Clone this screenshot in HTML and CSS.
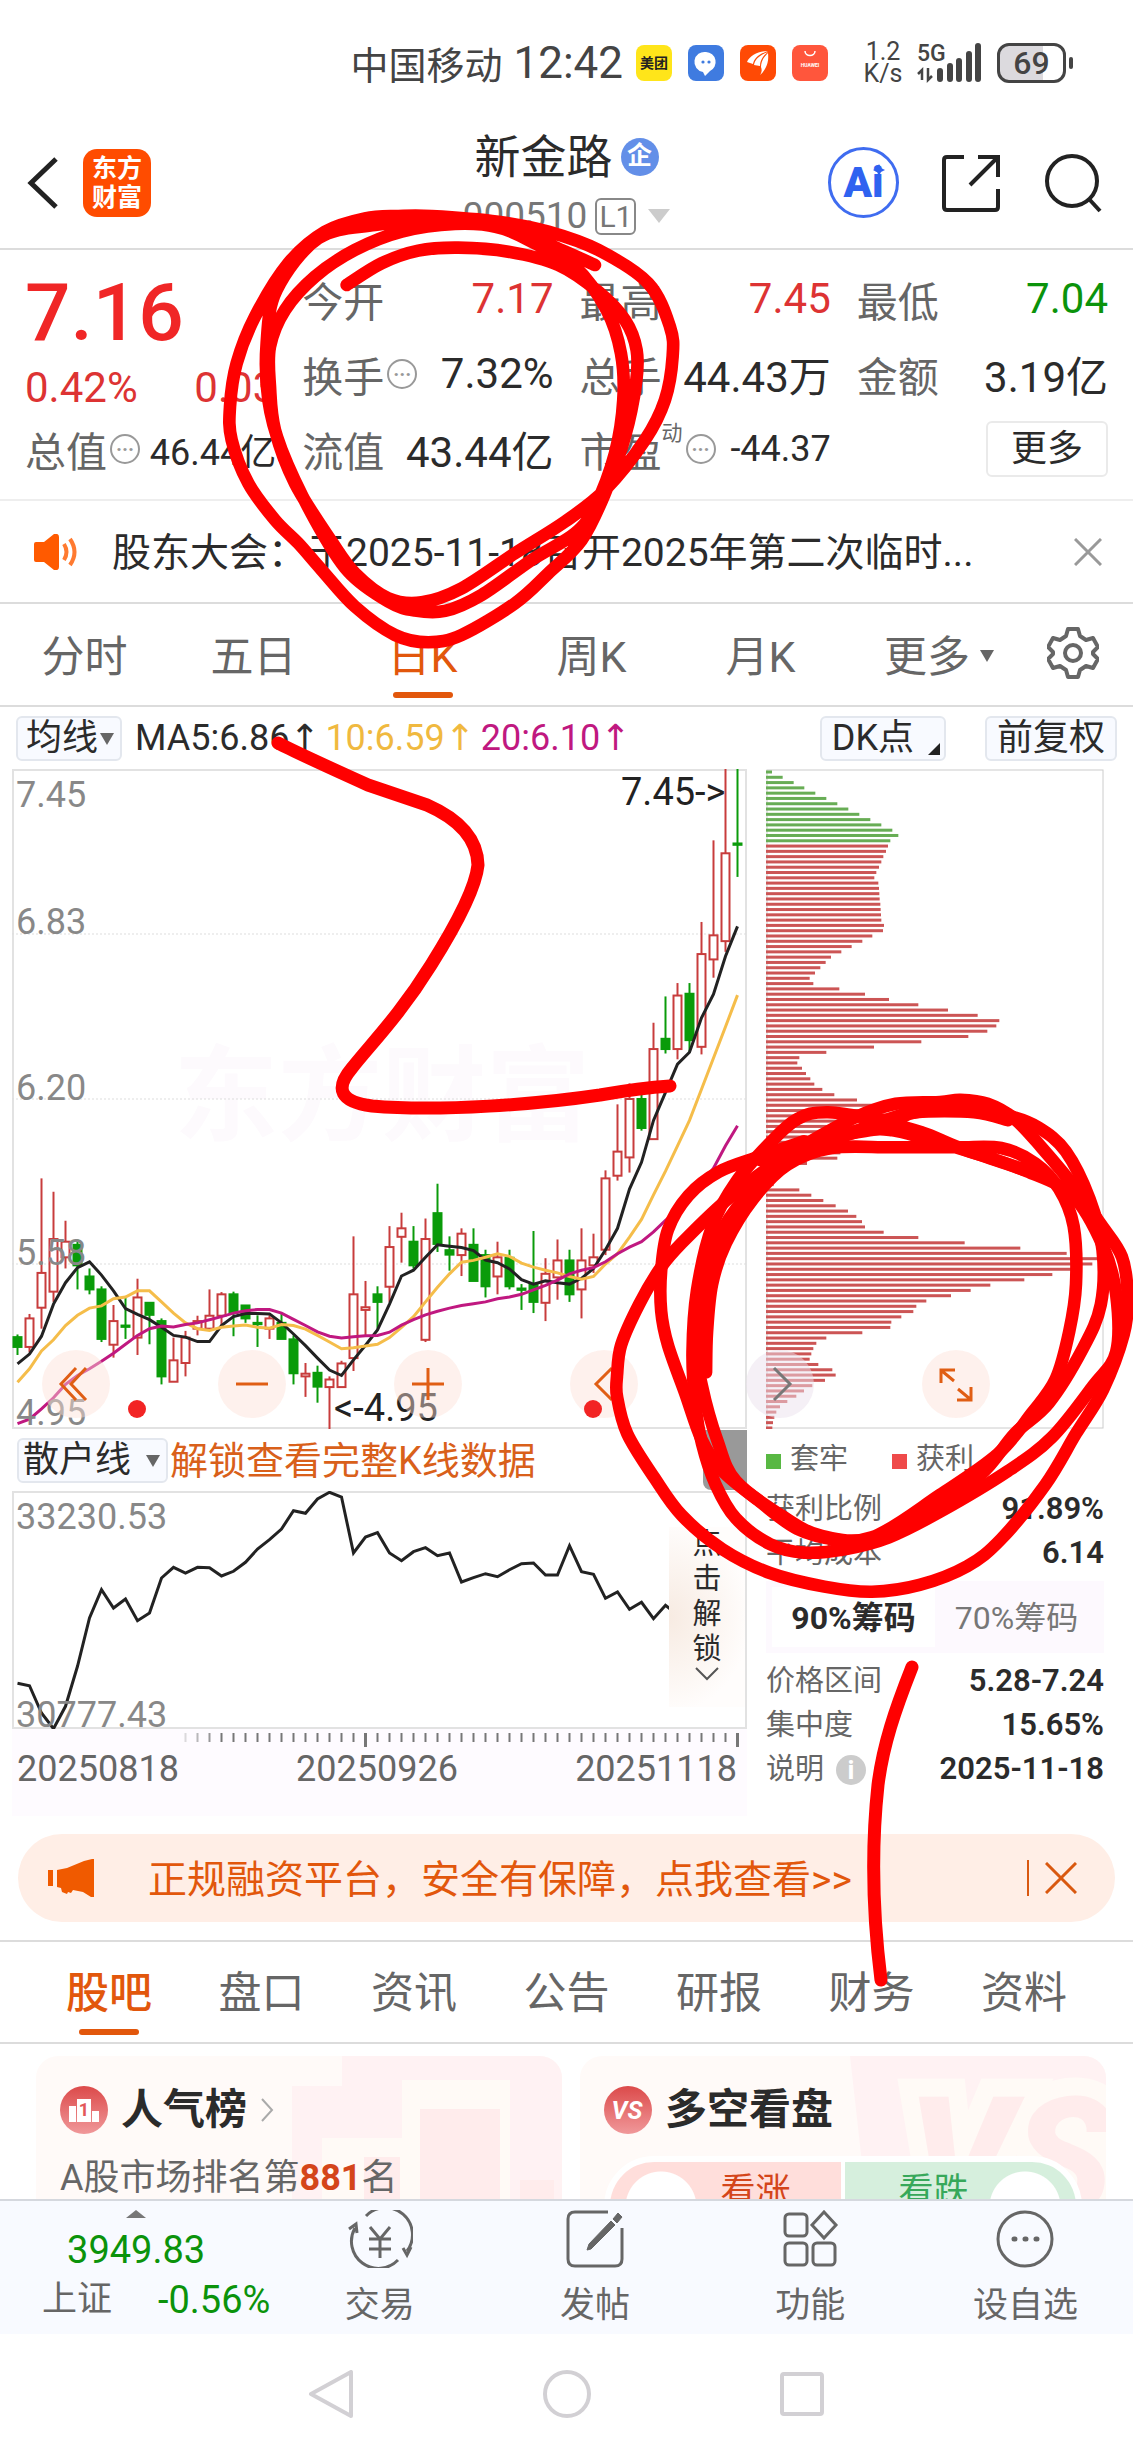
FILE: index.html
```html
<!DOCTYPE html>
<html lang="zh-CN">
<head>
  <meta charset="UTF-8">
  <meta name="viewport" content="width=device-width, initial-scale=1.0">
  <title>新金路 000510</title>
  <link rel="stylesheet" href="styles.css">
</head>
<body>

<div class="status-bar">
  <span class="carrier">中国移动</span>
  <span class="clock">12:42</span>
  <div class="apps">
    <span class="app app-yellow">美团</span>
    <span class="app app-blue">
      <svg viewBox="0 0 36 36"><path d="M18 7a10 10 0 0 1 4 19l-5 5-2-4A10 10 0 0 1 18 7z" fill="#fff"/><circle cx="15" cy="17" r="1.6" fill="#3f7be0"/><circle cx="21" cy="17" r="1.6" fill="#3f7be0"/></svg>
    </span>
    <span class="app app-orange">
      <svg viewBox="0 0 36 36" fill="#fff"><path d="M7 17C10 10 19 6 28 6c-9 3-14 7-15 13z"/><path d="M14 20c1-6 6-10 14-13-5 4-8 8-8 14z"/><path d="M21 22c0-6 3-10 7-14 1 8-1 16-8 22 2-3 2-5 1-8z"/></svg>
    </span>
    <span class="app app-coral">
      <svg viewBox="0 0 36 36"><path d="M13 6c0 6 10 6 10 0" fill="none" stroke="#fff" stroke-width="1.5"/><text x="18" y="22" font-size="5" text-anchor="middle" fill="#fff">HUAWEI</text></svg>
    </span>
  </div>
  <div class="speed"><span>1.2</span><span>K/s</span></div>
  <svg class="signal" viewBox="0 0 66 42">
    <text x="0" y="19" font-size="23" font-weight="500">5G</text>
    <path d="M5 38V28l-4 4M11 26v12l4-4" fill="none" stroke="#444" stroke-width="2.5"/>
    <path d="M23 37v-8M33 37v-13M42 37V19M52 37V12M61 37V4" stroke="#444" stroke-width="6" stroke-linecap="round"/>
  </svg>
  <div class="battery">69</div>
</div>

<header class="header">
  <button class="icon-btn back" aria-label="返回"><svg viewBox="0 0 32 54"><path d="M29 3L4 27l25 24" fill="none" stroke="#222" stroke-width="5"/></svg></button>
  <div class="brand">东方<br>财富</div>
  <div class="stock">
    <h1>新金路<span class="badge">企</span></h1>
    <div class="code">000510<span class="level">L1</span><i class="tri tri-light"></i></div>
  </div>
  <div class="actions">
    <button class="icon-btn ai" aria-label="Ai">Ai<svg viewBox="0 0 12 12"><path d="M6 0l2 4 4 2-4 2-2 4-2-4-4-2 4-2z" fill="#2f62f0"/></svg></button>
    <button class="icon-btn" aria-label="分享"><svg width="58" height="58" viewBox="0 0 58 58" fill="none" stroke="#222" stroke-width="4"><path d="M22 3H5q-3 0-3 3v47q0 3 3 3h48q3 0 3-3V35M36 3h20v20M56 3L28 31"/></svg></button>
    <button class="icon-btn" aria-label="搜索"><svg width="60" height="60" viewBox="0 0 60 60" fill="none" stroke="#222" stroke-width="4"><circle cx="29" cy="28" r="25"/><path d="M46 46l11 12"/></svg></button>
  </div>
</header>

<section class="quote">
  <div class="price-cell">
    <div class="price">7.16</div>
    <div class="change"><span>0.42%</span><span>0.03</span></div>
  </div>
  <div class="cell"><span>今开</span><b class="up">7.17</b></div>
  <div class="cell"><span>最高</span><b class="up">7.45</b></div>
  <div class="cell"><span>最低</span><b class="down">7.04</b></div>
  <div class="cell"><span>换手</span><i class="dots">···</i><b>7.32%</b></div>
  <div class="cell"><span>总手</span><b>44.43万</b></div>
  <div class="cell"><span>金额</span><b>3.19亿</b></div>
  <div class="cell small"><span>总值</span><i class="dots">···</i><b>46.44亿</b></div>
  <div class="cell"><span>流值</span><b>43.44亿</b></div>
  <div class="cell small dynamic"><span>市盈<sup>动</sup></span><i class="dots">···</i><b>-44.37</b></div>
  <div class="cell"><button class="more">更多</button></div>
</section>

<section class="notice">
  <svg width="44" height="36" viewBox="0 0 44 36"><path d="M2 8h8L20 0q5-1 5 3v30q0 4-5 3L10 28H2q-2 0-2-2V10q0-2 2-2z" fill="#ff5a00"/><path d="M30 10q5 8 0 16M36 5q9 13 0 26" fill="none" stroke="#ff7a30" stroke-width="4"/></svg>
  <a href="#">股东大会：于2025-11-18召开2025年第二次临时...</a>
  <button class="icon-btn" aria-label="关闭"><svg width="28" height="28" viewBox="0 0 28 28"><path d="M1 1l26 26M27 1L1 27" stroke="#999" stroke-width="3"/></svg></button>
</section>

<nav class="periods">
  <button>分时</button>
  <button>五日</button>
  <button class="active">日K</button>
  <button>周K</button>
  <button>月K</button>
  <button class="period-more">更多<i class="tri"></i></button>
  <button class="period-set" aria-label="设置"><svg width="52" height="52" viewBox="0 0 52 52" fill="none" stroke="#666" stroke-width="4" stroke-linejoin="round"><path d="M21 2h10l2 7 6 4 7-2 5 9-5 5v2l5 5-5 9-7-2-6 4-2 7H21l-2-7-6-4-7 2-5-9 5-5v-2l-5-5 5-9 7 2 6-4z"/><circle cx="26" cy="26" r="8"/></svg></button>
</nav>

<div class="ma-bar">
  <label class="pick"><select aria-label="指标"><option>均线</option></select><i class="tri"></i></label>
  <span>MA5:6.86<em>↑</em></span>
  <span class="ma10">10:6.59<em>↑</em></span>
  <span class="ma20">20:6.10<em>↑</em></span>
  <button class="chip-btn dk">DK点</button>
  <button class="chip-btn">前复权</button>
</div>

<main class="analysis">
  <div class="kline">
    <svg id="candles" class="chart" viewBox="0 0 735 660">
      <rect x="1" y="1" width="733" height="658" fill="#fff" stroke="#e2e2e2" stroke-width="2"/>
      <text x="370" y="364" class="watermark">东方财富</text>
      <path d="M0 165h735M0 330h735M0 495h735" stroke="#ddd" stroke-dasharray="2 2"/>
      <g id="candleBars"></g>
      <g class="axis">
        <text x="4" y="38">7.45</text>
        <text x="4" y="165">6.83</text>
        <text x="4" y="331">6.20</text>
        <text x="4" y="496">5.58</text>
        <text x="4" y="656">4.95</text>
      </g>
      <text x="609" y="36" class="mark">7.45-&gt;</text>
      <text x="322" y="652" class="mark">&lt;-4.95</text>
    </svg>

    <div class="sub-bar">
      <label class="pick pick-wide"><select aria-label="副图"><option>散户线</option></select><i class="tri"></i></label>
      <a href="#">解锁查看完整K线数据</a>
      <span class="handle">›</span>
    </div>

    <div class="retail">
      <svg id="retail" class="chart" viewBox="0 0 735 238">
        <rect x="1" y="1" width="733" height="236" fill="#fff" stroke="#e2e2e2" stroke-width="2"/>
        <g id="retailLine"></g>
        <g class="axis">
          <text x="4" y="38">33230.53</text>
          <text x="4" y="236">30777.43</text>
        </g>
      </svg>
      <button class="unlock">点击解锁<svg width="24" height="14" viewBox="0 0 24 14"><path d="M1 1l11 11L23 1" fill="none" stroke="#555" stroke-width="2"/></svg></button>
    </div>

    <div class="timeline">
      <svg id="ticks" class="chart" viewBox="0 0 735 20"></svg>
      <div class="dates"><span>20250818</span><span>20250926</span><span>20251118</span></div>
    </div>
  </div>

  <aside class="chips">
    <svg id="chips" class="chart" viewBox="0 0 338 660">
      <rect x="1" y="1" width="336" height="658" fill="#fff" stroke="#ccc"/>
    </svg>
    <div class="legend"><span><i class="sq sq-green"></i>套牢</span><span><i class="sq sq-red"></i>获利</span></div>
    <dl class="stats">
      <div><dt>获利比例</dt><dd>91.89%</dd></div>
      <div><dt>平均成本</dt><dd>6.14</dd></div>
    </dl>
    <div class="switch"><button class="on">90%筹码</button><button>70%筹码</button></div>
    <dl class="stats">
      <div><dt>价格区间</dt><dd>5.28-7.24</dd></div>
      <div><dt>集中度</dt><dd>15.65%</dd></div>
      <div><dt>说明<i class="info">i</i></dt><dd>2025-11-18</dd></div>
    </dl>
  </aside>

  <div class="chart-tools">
    <button class="dot" aria-label="最左"><svg viewBox="0 0 68 68"><path d="M34 18L19 34l15 16M44 18L29 34l15 16"/></svg></button>
    <button aria-label="缩小"><svg viewBox="0 0 68 68"><path d="M18 34h32"/></svg></button>
    <button aria-label="放大"><svg viewBox="0 0 68 68"><path d="M18 34h32M34 18v32"/></svg></button>
    <button class="dot dot-left" aria-label="向左"><svg viewBox="0 0 68 68"><path d="M42 18L26 34l16 16"/></svg></button>
    <button class="grey" aria-label="向右"><svg viewBox="0 0 68 68"><path d="M28 18l16 16-16 16"/></svg></button>
    <button aria-label="全屏"><svg viewBox="0 0 68 68"><path d="M19 33V20h14M20 21l12 10M49 37v13H35M48 49L36 39"/></svg></button>
  </div>
</main>

<div class="banner">
  <svg width="46" height="38" viewBox="0 0 46 38" fill="#f05a00"><path d="M0 11h5v16H0zM9 11l10-2 17-7 8-2h2v38h-3l-8-5-10-2-2 3-3-1-1 2-5-2-1-4-4-1z"/></svg>
  <a href="#">正规融资平台，安全有保障，点我查看&gt;&gt;</a>
  <button class="icon-btn" aria-label="关闭广告"><svg width="32" height="32" viewBox="0 0 32 32"><path d="M1 1l30 30M31 1L1 31" stroke="#d9580f" stroke-width="3"/></svg></button>
</div>

<nav class="sections">
  <a href="#" class="active">股吧</a>
  <a href="#">盘口</a>
  <a href="#">资讯</a>
  <a href="#">公告</a>
  <a href="#">研报</a>
  <a href="#">财务</a>
  <a href="#">资料</a>
</nav>

<section class="feed">
  <article class="card">
    <svg class="card-art" viewBox="0 0 270 143"><path d="M50 0h220v143H0V30h50z" fill="#fff2f3"/><path d="M110 24h108v119h-108zM30 82h80v61H30z" fill="#fffaf6"/><path d="M128 53h80v90h-80zM228 124h34v19h-34zM72 101h36v42H72z" fill="#ffecec"/></svg>
    <h2>
      <svg width="48" height="48" viewBox="0 0 48 48"><circle cx="24" cy="24" r="24" fill="url(#iconRed)"/><path d="M9 20h7v16H9zM17 13h14v23H17zM32 25h7v11h-7z" fill="#fff"/><text x="24" y="30" font-size="18" font-weight="700" text-anchor="middle" fill="#e3575a">1</text></svg>
      人气榜
      <svg width="14" height="24" viewBox="0 0 14 24"><path d="M2 1l10 11L2 23" fill="none" stroke="#aaa" stroke-width="2"/></svg>
    </h2>
    <p>A股市场排名第<strong>881</strong>名</p>
  </article>
  <article class="card">
    <svg class="card-art" viewBox="0 0 270 143"><path d="M14 0h256v143H30z" fill="#fff2f3"/><text x="72" y="158" class="vs-art">VS</text></svg>
    <h2>
      <svg width="48" height="48" viewBox="0 0 48 48"><defs><linearGradient id="iconRed" x2="0" y2="1"><stop stop-color="#dc4a4a"/><stop offset="1" stop-color="#f0989a"/></linearGradient></defs><circle cx="24" cy="24" r="24" fill="url(#iconRed)"/><text x="23" y="33" font-size="25" font-weight="700" font-style="italic" text-anchor="middle" fill="#fff">VS</text></svg>
      多空看盘
    </h2>
    <div class="vote"><button class="bull">看涨</button><button class="bear">看跌</button></div>
  </article>
</section>

<footer class="toolbar">
  <div class="index">
    <i class="tri tri-up"></i>
    <div class="index-value">3949.83</div>
    <div class="index-row"><span>上证</span><b>-0.56%</b></div>
  </div>
  <a href="#"><svg viewBox="0 0 66 58"><path d="M19 6a27 27 0 0 1 41 35M51 50A27 27 0 0 1 8 18M2 19l7-5 1 9M64 37l-4 8-4-7"/><path d="M23 17l10 12 10-12M33 29v19M22 29h22M22 39h22"/></svg>交易</a>
  <a href="#"><svg viewBox="0 0 66 58"><path d="M46 2H13q-7 0-7 7v40q0 7 7 7h40q7 0 7-7V18"/><path d="M56 3l4 4-5 6-4-4zM49 11l4 4-24 24-4 1 2-6z" fill="#666" stroke-width="1"/></svg>发帖</a>
  <a href="#"><svg viewBox="0 0 66 58"><rect x="8" y="4" width="22" height="22" rx="4"/><rect x="8" y="33" width="22" height="22" rx="4"/><rect x="36" y="33" width="22" height="22" rx="4"/><path d="M47 2l12 13-12 13-12-13z"/></svg>功能</a>
  <a href="#"><svg viewBox="0 0 66 58"><circle cx="33" cy="29" r="27"/><path d="M22 29h1M33 29h1M44 29h1" stroke-width="5" stroke-linecap="round"/></svg>设自选</a>
</footer>

<div class="system-nav">
  <button class="icon-btn" aria-label="后退"><svg width="48" height="48" viewBox="0 0 48 48"><path d="M43 2v44L3 24z"/></svg></button>
  <button class="icon-btn" aria-label="主页"><svg width="48" height="48" viewBox="0 0 48 48"><circle cx="24" cy="24" r="22"/></svg></button>
  <button class="icon-btn" aria-label="任务"><svg width="48" height="48" viewBox="0 0 48 48"><rect x="4" y="4" width="40" height="40" rx="2"/></svg></button>
</div>

<!-- hand-drawn pen marks over the whole page -->
<svg class="pen" viewBox="0 0 1133 2453">
  <g id="penTop" transform="translate(215 200) scale(0.3333)" stroke-width="38"></g>
  <path d="M278 743Q295 752 368 785L427 805Q477 827 478 865Q475 895 431 965C400 1015 370 1045 352 1068Q325 1100 372 1106C440 1112 540 1104 600 1095Q640 1088 670 1086"/>
  <g id="penChips" transform="translate(600 1080) scale(0.34)" stroke-width="37"></g>
  <path d="M912 1667C895 1710 883 1745 878 1785C872 1840 871 1900 881 1980"/>
</svg>

<script src="charts.js"></script>
</body>
</html>
```
FILE: styles.css
```css
* {
  box-sizing: border-box;
}

body {
  margin: 0;
  position: relative;
  display: flex;
  flex-direction: column;
  height: 100vh;
  overflow: hidden;
  background: #fff;
  color: #2b2b2b;
  font-family: Roboto, "Noto Sans CJK SC", sans-serif;
}

body > * {
  flex: none;
}

button, select {
  font: inherit;
  color: inherit;
  background: none;
  border: none;
  padding: 0;
  margin: 0;
}

a {
  color: inherit;
  text-decoration: none;
}

i, em {
  font-style: normal;
}

svg {
  display: block;
}

.icon-btn {
  display: flex;
  align-items: center;
  justify-content: center;
}

.tri {
  display: inline-block;
  border: 7px solid transparent;
  border-top: 12px solid #666;
  border-bottom: 0;
}

.tri-light {
  border-width: 14px 11px 0;
  border-top-color: #ccc;
}

.tri-up {
  border: 10px solid transparent;
  border-top: 0;
  border-bottom: 8px solid #777;
}

/* status bar */
.status-bar {
  display: flex;
  align-items: center;
  justify-content: flex-end;
  height: 125px;
  padding-right: 60px;
  color: #444;
}

.carrier {
  font-size: 38px;
  margin-right: 11px;
}

.clock {
  font-size: 44px;
  margin-right: 13px;
}

.apps {
  display: flex;
  gap: 16px;
  margin-right: 35px;
}

.app {
  width: 36px;
  height: 36px;
  border-radius: 8px;
  font-size: 14px;
  font-weight: 700;
  line-height: 36px;
  text-align: center;
  color: #222;
}

.app-yellow { background: #ffe51a; }
.app-blue { background: #3f7be0; }
.app-orange { background: #ff4a05; }
.app-coral { background: #ff563c; }

.speed {
  display: flex;
  flex-direction: column;
  align-items: center;
  width: 40px;
  margin-right: 14px;
  font-size: 25px;
  line-height: 22px;
}

.signal {
  width: 66px;
  height: 42px;
  margin-right: 14px;
  fill: #444;
}

.battery {
  position: relative;
  width: 69px;
  height: 40px;
  margin-right: 7px;
  border: 3px solid #444;
  border-radius: 12px;
  background: linear-gradient(90deg, #dcdade 69%, #fff 69%);
  font-size: 32px;
  font-weight: 500;
  line-height: 34px;
  text-align: center;
}

.battery::after {
  content: "";
  position: absolute;
  right: -10px;
  top: 11px;
  width: 4px;
  height: 12px;
  border-radius: 2px;
  background: #444;
}

/* header */
.header {
  display: grid;
  grid-template-columns: auto auto 1fr;
  align-items: center;
  position: relative;
  height: 125px;
  padding: 0 30px 8px 27px;
  border-bottom: 2px solid #dcdcdc;
}

.back svg {
  width: 32px;
  height: 54px;
}

.brand {
  width: 68px;
  height: 68px;
  margin-left: 24px;
  border-radius: 14px;
  background: #ff4c00;
  color: #fff;
  font-size: 25px;
  font-weight: 700;
  line-height: 29px;
  padding-top: 5px;
  text-align: center;
}

.stock {
  position: absolute;
  left: 0;
  right: 0;
  top: 0;
  text-align: center;
}

.stock h1 {
  display: flex;
  justify-content: center;
  align-items: center;
  gap: 8px;
  margin: 0;
  font-size: 46px;
  font-weight: 400;
  line-height: 64px;
}

.badge {
  width: 38px;
  height: 38px;
  border-radius: 50%;
  background: #638fe8;
  color: #fff;
  font-size: 25px;
  font-weight: 700;
  line-height: 36px;
}

.code {
  display: flex;
  justify-content: center;
  align-items: center;
  font-size: 37px;
  line-height: 54px;
  color: #777;
}

.level {
  border: 2px solid #888;
  border-radius: 6px;
  margin: 0 12px 0 8px;
  width: 41px;
  font-size: 30px;
  line-height: 33px;
}

.actions {
  display: flex;
  justify-content: flex-end;
  align-items: center;
  gap: 43px;
}

.ai {
  position: relative;
  width: 71px;
  height: 71px;
  border: 3px solid #3f6cf0;
  border-radius: 50%;
  color: #2f62f0;
  font-size: 42px;
  font-weight: 900;
}

.ai svg {
  position: absolute;
  right: 11px;
  top: 14px;
  width: 12px;
  height: 12px;
}

/* quote numbers */
.quote {
  display: grid;
  grid-template-columns: repeat(4, 1fr);
  grid-auto-rows: 75px;
  column-gap: 26px;
  padding: 11px 25px 13px;
  border-bottom: 2px solid #eee;
}

.price-cell {
  grid-row: span 2;
  padding-top: 5px;
}

.price {
  font-size: 80px;
  font-weight: 500;
  line-height: 94px;
  color: #f02626;
}

.change {
  display: flex;
  justify-content: space-between;
  font-size: 42px;
  line-height: 56px;
  color: #d33;
}

.cell {
  display: flex;
  align-items: center;
  white-space: nowrap;
  font-size: 42px;
}

.cell span {
  position: relative;
  font-size: 41px;
  color: #666;
}

.cell b {
  margin-left: auto;
  font-weight: 400;
}

.cell sup {
  position: absolute;
  left: 82px;
  top: 0;
  font-size: 21px;
  line-height: 28px;
}

.small b {
  font-size: 36px;
}

.dots {
  width: 30px;
  height: 30px;
  margin-left: 3px;
  border: 2px solid #999;
  border-radius: 50%;
  color: #999;
  font-size: 20px;
  font-weight: 700;
  line-height: 26px;
  text-align: center;
}

.dynamic .dots {
  margin-left: 24px;
}

.up { color: #d33; }
.down { color: #0b930b; }

.more {
  margin-left: auto;
  width: 122px;
  height: 56px;
  border: 2px solid #eaeaea;
  border-radius: 6px;
  font-size: 36px;
  line-height: 50px;
}

.notice {
  display: flex;
  align-items: center;
  height: 103px;
  padding: 0 31px 0 34px;
  border-bottom: 2px solid #dcdcdc;
}

.notice a {
  flex: 1;
  margin-left: 34px;
  padding-bottom: 5px;
  font-size: 39px;
  white-space: nowrap;
}

/* period tabs */
.periods {
  display: flex;
  height: 103px;
  padding-right: 20px;
  border-bottom: 2px solid #dcdcdc;
  font-size: 43px;
  color: #666;
}

.periods button {
  position: relative;
  flex: 169;
  padding-bottom: 3px;
}

.periods .period-more {
  flex: 188;
}

.period-more .tri {
  margin-left: 10px;
  vertical-align: 10px;
}

.periods .period-set {
  flex: 80;
  display: flex;
  align-items: center;
  justify-content: center;
}

.active {
  color: #e2570c;
}

.active::after {
  content: "";
  position: absolute;
  left: calc(50% - 30px);
  bottom: 7px;
  width: 60px;
  height: 6px;
  border-radius: 3px;
  background: #e2570c;
}

/* moving averages */
.ma-bar {
  display: flex;
  align-items: center;
  height: 62px;
  padding: 0 16px;
  font-size: 36px;
  white-space: nowrap;
}

.ma-bar span {
  margin-left: 13px;
}

.ma-bar em {
  display: inline-block;
  width: 28px;
  font-family: "DejaVu Sans", sans-serif;
}

.ma-bar .ma10 { color: #f0b93f; margin-left: 8px; }
.ma-bar .ma20 { color: #c01880; margin-left: 8px; }

.pick {
  position: relative;
  display: block;
  width: 106px;
  height: 45px;
}

.pick select {
  appearance: none;
  display: block;
  width: 100%;
  height: 100%;
  padding-left: 8px;
  border: 2px solid #e3e7ee;
  border-radius: 6px;
  background: #f8faff;
  font-size: 36px;
  line-height: 40px;
}

.pick .tri {
  position: absolute;
  right: 8px;
  top: 17px;
}

.pick-wide {
  width: 151px;
}

.pick-wide select {
  padding-left: 4px;
}

.chip-btn {
  position: relative;
  height: 45px;
  padding: 0 10px;
  border: 2px solid #e3e7ee;
  border-radius: 6px;
  background: #f8faff;
  font-size: 36px;
  line-height: 40px;
}

.dk {
  margin-left: auto;
  margin-right: 39px;
  padding-right: 30px;
}

.dk::after {
  content: "";
  position: absolute;
  right: 4px;
  bottom: 4px;
  border: 6px solid #222;
  border-left-color: transparent;
  border-top-color: transparent;
}

/* charts */
.analysis {
  position: relative;
  display: grid;
  grid-template-columns: 735fr 338fr;
  gap: 19px;
  padding: 0 29px 0 12px;
}

.chart {
  width: 100%;
  height: auto;
}

.axis {
  font-size: 36px;
  fill: #888;
}

.mark {
  font-size: 38px;
  fill: #222;
}

.watermark {
  font-size: 104px;
  font-weight: 700;
  text-anchor: middle;
  fill: #fdfafd;
}

.sub-bar {
  display: flex;
  align-items: center;
  height: 62px;
  padding-left: 5px;
  font-size: 38px;
  color: #d9601a;
}

.sub-bar .pick {
  color: #2b2b2b;
}

.sub-bar a {
  margin-left: 2px;
  padding-bottom: 5px;
}

.handle {
  width: 44px;
  height: 60px;
  margin-left: auto;
  border-radius: 0 0 0 8px;
  background: #999;
  color: #fff;
  line-height: 56px;
  text-align: center;
}

.retail {
  position: relative;
}

.unlock {
  position: absolute;
  right: 2px;
  top: 36px;
  width: 76px;
  height: 180px;
  display: flex;
  flex-direction: column;
  align-items: center;
  padding: 0 24px;
  background: radial-gradient(ellipse at left, #f7ebe2, #fffdfc 75%);
  font-size: 29px;
  line-height: 35px;
}

.timeline {
  height: 87px;
  padding-top: 4px;
  background: #fefbff;
}

.dates {
  display: flex;
  justify-content: space-between;
  padding: 0 10px 0 5px;
  font-size: 36px;
  line-height: 32px;
  color: #666;
}

.legend {
  display: flex;
  gap: 44px;
  margin-top: 8px;
  font-size: 29px;
  line-height: 44px;
  color: #666;
}

.sq {
  display: inline-block;
  width: 15px;
  height: 15px;
  margin-right: 9px;
}

.sq-green { background: #58b843; }
.sq-red { background: #ef4a4a; }

.stats {
  margin: 6px 0;
}

.stats div {
  display: flex;
  justify-content: space-between;
  align-items: center;
  line-height: 44px;
}

.stats dt {
  font-size: 29px;
  color: #666;
}

.stats dd {
  margin: 0;
  font-size: 31px;
  font-weight: 600;
}

.info {
  display: inline-block;
  width: 30px;
  height: 30px;
  margin-left: 12px;
  border-radius: 50%;
  background: #ccc;
  color: #fff;
  font-size: 26px;
  font-weight: 700;
  line-height: 30px;
  text-align: center;
}

.switch {
  display: flex;
  height: 72px;
  padding: 6px;
  background: #fdf9fe;
  font-size: 32px;
  color: #777;
}

.switch button {
  flex: 1;
  padding-bottom: 4px;
}

.switch .on {
  background: #fff;
  color: #2b2b2b;
  font-weight: 700;
}

.chart-tools {
  position: absolute;
  left: 42px;
  top: 581px;
  display: flex;
  gap: 108px;
}

.chart-tools button {
  position: relative;
  width: 68px;
  height: 68px;
  border-radius: 50%;
  background: rgba(253, 225, 215, 0.45);
}

.chart-tools svg {
  fill: none;
  stroke: #e05e14;
  stroke-width: 3;
}

.chart-tools .grey {
  background: rgba(235, 225, 238, 0.5);
}

.chart-tools .grey svg {
  stroke: #777;
}

.dot::after {
  content: "";
  position: absolute;
  left: 86px;
  top: 50px;
  width: 18px;
  height: 18px;
  border-radius: 50%;
  background: #f22424;
}

.dot-left::after {
  left: 14px;
}

/* ad banner */
.banner {
  display: flex;
  align-items: center;
  height: 88px;
  margin: 18px;
  padding: 0 38px 0 30px;
  border-radius: 44px;
  background: #ffeee6;
  color: #e2570c;
  font-size: 39px;
  white-space: nowrap;
}

.banner a {
  flex: 1;
  margin-left: 54px;
  padding-bottom: 5px;
}

.banner button {
  padding-left: 16px;
  border-left: 2px solid #d9580f;
  height: 36px;
}

.sections {
  display: flex;
  justify-content: space-between;
  height: 104px;
  padding: 0 66px;
  border-top: 2px solid #dcdcdc;
  border-bottom: 2px solid #dcdcdc;
  font-size: 43px;
  line-height: 102px;
  color: #666;
}

.sections a {
  position: relative;
}

.sections .active {
  color: #e2570c;
  font-weight: 500;
}

/* feed cards, cut off by the toolbar */
.feed {
  flex: 1;
  min-height: 0;
  overflow: hidden;
  display: grid;
  grid-template-columns: 1fr 1fr;
  gap: 18px;
  padding: 12px 27px 0 36px;
}

.card {
  position: relative;
  height: 260px;
  padding: 24px;
  border-radius: 22px;
  background: #fffaf8;
  overflow: hidden;
}

.card-art {
  position: absolute;
  right: 0;
  top: 0;
  width: 270px;
  height: 143px;
}

.vs-art {
  font-size: 164px;
  font-weight: 900;
  font-style: italic;
  fill: #ffecec;
  stroke: #fffaf6;
  stroke-width: 36px;
  paint-order: stroke;
}

.card h2 {
  position: relative;
  display: flex;
  align-items: center;
  gap: 13px;
  margin: 0;
  font-size: 42px;
  font-weight: 700;
  line-height: 60px;
}

.card p {
  position: relative;
  margin: 12px 0 0;
  font-size: 36px;
  line-height: 52px;
  color: #666;
}

.card strong {
  color: #d4451a;
}

.vote {
  position: relative;
  display: flex;
  gap: 4px;
  height: 100px;
  margin-top: 16px;
  border: 6px solid #fff;
  border-radius: 50px;
  overflow: hidden;
  background: #fff;
}

.vote button {
  flex: 1;
  padding-bottom: 40px;
  font-size: 35px;
}

.bull {
  color: #d4451a;
  background: radial-gradient(circle at 51px 45px, #fff 35px, #ffdedb 36px);
  text-indent: 60px;
}

.bear {
  color: #37a85a;
  background: radial-gradient(circle at 180px 45px, #fff 35px, #d6efdd 36px);
  text-indent: -54px;
}

/* bottom toolbar */
.toolbar {
  display: grid;
  grid-template-columns: 272fr repeat(4, 215fr);
  height: 135px;
  border-top: 2px solid #d5d8de;
  background: #f8faff;
  color: #666;
  font-size: 35px;
}

.toolbar a {
  display: flex;
  flex-direction: column;
  align-items: center;
  padding-top: 9px;
  line-height: 76px;
}

.toolbar a svg {
  width: 66px;
  height: 58px;
  fill: none;
  stroke: #666;
  stroke-width: 3;
}

.index {
  display: flex;
  flex-direction: column;
  align-items: center;
  padding-top: 9px;
  line-height: 50px;
}

.index-value {
  margin-top: 7px;
  font-size: 38px;
  color: #0b930b;
}

.index-row {
  display: flex;
  gap: 46px;
  padding-left: 40px;
}

.index-row b {
  font-size: 38px;
  font-weight: 400;
  color: #0b930b;
}

.system-nav {
  display: flex;
  justify-content: center;
  gap: 187px;
  height: 119px;
  align-items: center;
}

.system-nav svg {
  fill: none;
  stroke: #d2d0d4;
  stroke-width: 4;
  stroke-linejoin: round;
}

.pen {
  position: absolute;
  left: 0;
  top: 0;
  width: 100%;
  height: auto;
  fill: none;
  stroke: #ff0000;
  stroke-width: 13;
  stroke-linecap: round;
  stroke-linejoin: round;
  pointer-events: none;
}
```
FILE: charts.js
```js
const NS = "http://www.w3.org/2000/svg";
const STEP = 12;
const START = 5.5;

function draw(parent, tag, attrs) {
  const el = document.createElementNS(NS, tag);
  for (const key in attrs) el.setAttribute(key, attrs[key]);
  parent.appendChild(el);
}

// levels run from 20 (7.45) down to 1500 (4.95)
const level = v => (v - 20) / 1480 * 660;

// [direction, high, body top, body bottom, low]
const candles = [
  ["g",1288,1294,1316,1334],["r",1242,1252,1316,1328],["r",938,1150,1228,1275],["r",968,1074,1192,1215],
  ["r",1033,1080,1115,1140],["g",1075,1087,1133,1187],["g",1140,1158,1187,1198],["g",1180,1187,1298,1305],
  ["r",1222,1258,1311,1340],["g",1205,1268,1271,1298],["r",1163,1205,1295,1334],["g",1216,1217,1244,1310],
  ["g",1252,1258,1382,1400],["r",1295,1346,1394,1394],["r",1280,1295,1352,1382],["r",1246,1258,1275,1290],
  ["r",1187,1246,1275,1280],["r",1193,1198,1246,1268],["g",1192,1198,1240,1292],["g",1222,1223,1252,1262],
  ["g",1245,1262,1265,1316],["r",1245,1252,1275,1298],["g",1240,1262,1298,1298],["g",1290,1299,1375,1400],
  ["r",1352,1376,1382,1428],["g",1358,1374,1405,1441],["r",1382,1389,1406,1500],["r",1347,1353,1406,1406],
  ["r",1068,1198,1341,1370],["r",1168,1227,1233,1290],["g",1180,1198,1215,1275],["r",1045,1092,1181,1215],
  ["r",1015,1050,1069,1127],["g",1045,1080,1133,1140],["r",1028,1074,1300,1305],["g",950,1016,1085,1103],
  ["g",1068,1099,1109,1145],["r",1050,1062,1110,1157],["g",1050,1087,1168,1168],["g",1098,1110,1180,1205],
  ["r",1080,1115,1158,1198],["g",1098,1116,1180,1187],["g",1175,1185,1188,1233],["g",1056,1175,1215,1240],
  ["r",1117,1152,1217,1258],["r",1075,1122,1160,1210],["g",1098,1122,1198,1215],["r",1050,1122,1187,1252],
  ["r",1062,1115,1133,1150],["r",920,938,1098,1110],["r",772,878,932,943],["r",725,760,891,925],
  ["g",740,760,825,831],["r",589,648,850,850],["g",530,625,648,658],["r",500,528,648,671],
  ["g",500,524,628,655],["r",363,435,643,660],["r",180,393,447,488],["r",20,209,406,430],["g",20,187,190,262]
];

const ma5 = [1354,1332,1292,1220,1172,1138,1125,1155,1190,1230,1243,1255,1272,1290,1294,1304,1304,1268,1248,1241,1241,1242,1262,1287,1313,1341,1368,1380,1345,1312,1278,1220,1157,1144,1115,1087,1090,1093,1100,1121,1127,1141,1165,1175,1168,1172,1175,1162,1140,1098,1050,962,902,808,745,682,655,578,525,440,373];
const ma10 = [1395,1365,1325,1300,1268,1245,1229,1224,1208,1204,1190,1190,1215,1240,1262,1275,1279,1272,1269,1267,1272,1274,1266,1268,1276,1290,1305,1320,1318,1314,1310,1295,1272,1248,1215,1182,1152,1126,1122,1115,1107,1113,1128,1137,1144,1150,1158,1164,1158,1130,1107,1070,1030,975,922,865,808,738,668,598,527];
const ma20 = [1488,1478,1455,1430,1400,1380,1365,1348,1330,1310,1290,1275,1269,1271,1266,1262,1255,1248,1240,1235,1232,1232,1240,1254,1268,1282,1292,1296,1293,1291,1290,1283,1267,1255,1244,1236,1229,1223,1219,1215,1208,1204,1198,1188,1178,1166,1152,1144,1138,1125,1107,1092,1080,1058,1032,1010,985,950,915,865,820];

const bars = document.getElementById("candleBars");
candles.forEach(([dir, high, top, bottom, low], i) => {
  const x = START + i * STEP;
  const color = dir === "r" ? "#c83c3c" : "#0a9b0a";
  draw(bars, "path", { d: `M${x} ${level(high)}V${level(low)}`, stroke: color, "stroke-width": 2 });
  draw(bars, "rect", {
    x: x - 4, y: level(top), width: 8, height: Math.max(1, level(bottom) - level(top)),
    fill: dir === "r" ? "#fff" : color, stroke: color, "stroke-width": 2
  });
});

function line(parent, values, scale, color) {
  const points = values.map((v, i) => `${START + i * STEP},${scale(v).toFixed(1)}`).join(" ");
  draw(parent, "polyline", { points, fill: "none", stroke: color, "stroke-width": 3 });
}
line(bars, ma5, level, "#222");
line(bars, ma10, level, "#f5bd4a");
line(bars, ma20, level, "#c01880");

// retail holders line
const retail = [791,798,880,927,860,740,595,510,565,538,603,580,475,443,460,443,444,469,455,428,388,360,328,273,281,238,218,232,400,352,339,400,423,396,384,408,400,487,474,462,471,450,432,430,466,466,378,456,464,536,517,569,548,597,557,585];
line(document.getElementById("retailLine"), retail, v => (v - 214) / 3, "#222");

// time axis ticks, faded at the left
const ticks = document.getElementById("ticks");
for (let i = 14; i <= 60; i++) {
  const major = i === 29 || i === 60;
  draw(ticks, "path", {
    d: `M${START + i * STEP} 0v${major ? 14 : 9}`, stroke: "#777",
    "stroke-width": major ? 3 : 2, opacity: Math.min(1, (i - 13) / 4)
  });
}

// chip distribution, one bar per price step
const chips = [18,50,83,115,148,181,214,247,280,313,346,379,397,373,366,360,352,346,339,331,325,337,339,340,341,343,344,345,346,354,351,319,289,257,226,195,179,163,147,131,142,220,297,369,457,546,635,700,691,664,607,466,324,181,100,94,108,120,133,145,169,205,273,353,323,313,293,273,253,233,223,218,223,214,123,73,48,33,23,100,136,172,209,246,271,288,297,353,457,596,763,902,1013,979,933,859,775,673,614,555,481,451,442,406,376,373,289,181,151,142,136,131,157,199,209,177,139,114,91,64,42,31,25,21,19];
const chipSvg = document.getElementById("chips");
chips.forEach((w, i) => {
  draw(chipSvg, "rect", {
    x: 0, y: 1.5 + i * 5.29, width: w / 3, height: 3, fill: i < 14 ? "#68ad55" : "#cc5555"
  });
});

// smooth curve through x,y pairs
function pen(id, pts) {
  const p = [];
  for (let i = 0; i < pts.length; i += 2) p.push([pts[i], pts[i + 1]]);
  let d = `M${p[0]}`;
  for (let i = 0; i < p.length - 1; i++) {
    const a = p[i - 1] || p[i], b = p[i], c = p[i + 1], e = p[i + 2] || c;
    d += `C${b[0] + (c[0] - a[0]) / 6} ${b[1] + (c[1] - a[1]) / 6} ${c[0] - (e[0] - b[0]) / 6} ${c[1] - (e[1] - b[1]) / 6} ${c[0]} ${c[1]}`;
  }
  draw(document.getElementById(id), "path", { d });
}

pen("penTop", [
  395,255, 500,190, 610,152, 730,143, 880,155, 1030,195, 1150,275, 1230,360, 1265,450, 1263,550, 1230,710, 1170,880,
  1100,1020, 1000,1120, 900,1210, 740,1305, 640,1327, 540,1305, 420,1220, 320,1110, 250,1030, 180,960, 100,850, 50,720,
  45,620, 65,490, 120,350, 220,190, 330,95, 450,55, 550,48, 650,48, 850,65, 1000,95, 1150,150, 1300,250, 1365,380,
  1373,470, 1350,600, 1290,720, 1170,870, 1050,965, 900,1060, 740,1165, 620,1207, 520,1195, 420,1120, 350,1025,
  240,850, 180,690, 165,560, 165,440, 210,330, 300,230, 420,150, 560,95, 720,72, 850,82, 960,130, 1080,200, 1175,330,
  1218,460, 1225,600, 1200,760, 1140,920, 1080,1000, 950,1080, 800,1185, 690,1233, 600,1232, 520,1205, 400,1115,
  300,960, 200,750, 160,600, 155,430, 185,270, 310,115, 480,75, 700,60, 900,95, 1040,150, 1140,195
]);

pen("penChips", [
  50,870, 62,780, 115,660, 180,550, 240,480, 370,355, 500,255, 620,180, 750,110, 870,70, 1000,65, 1060,58, 1140,70,
  1220,115, 1300,200, 1400,320, 1470,420, 1535,520, 1552,640, 1540,750, 1480,910, 1400,1040, 1310,1190, 1180,1350,
  1080,1430, 940,1485, 800,1505, 660,1490, 500,1450, 360,1380, 240,1280, 160,1170, 80,1040, 50,930, 50,870
]);
pen("penChips", [
  620,210, 730,160, 850,135, 950,155, 1060,200, 1255,268, 1390,340, 1480,490, 1518,630, 1518,800, 1450,900, 1330,1050,
  1200,1150, 1000,1270, 850,1345, 720,1380, 600,1390, 500,1365, 400,1290, 340,1190, 300,1070, 280,950, 272,800,
  285,620, 330,430, 400,300, 500,185, 580,115, 670,95, 850,118, 930,95, 1100,95, 1200,118
]);
pen("penChips", [
  600,180, 470,225, 350,270, 260,340, 200,440, 180,560, 180,680, 200,780, 250,920, 300,1060, 360,1150, 470,1240,
  580,1320, 700,1353, 820,1352, 960,1260, 1120,1160, 1220,1040, 1320,950, 1420,790, 1473,660, 1478,500, 1440,350,
  1370,210, 1290,140, 1200,105, 1050,82, 900,100, 780,140, 600,200, 470,235
]);
pen("penChips", [
  312,860, 315,740, 330,600, 370,480, 450,350, 550,250, 680,200, 860,198, 1050,198, 1180,200, 1280,245, 1350,320,
  1393,430, 1400,600, 1380,740, 1340,880, 1270,980, 1170,1100, 1000,1220, 800,1345, 650,1340, 540,1285, 400,1180,
  345,1060, 300,900, 285,780, 310,580, 360,440, 460,310, 600,195, 780,150, 860,148, 950,170, 1100,215, 1250,265
]);
```
